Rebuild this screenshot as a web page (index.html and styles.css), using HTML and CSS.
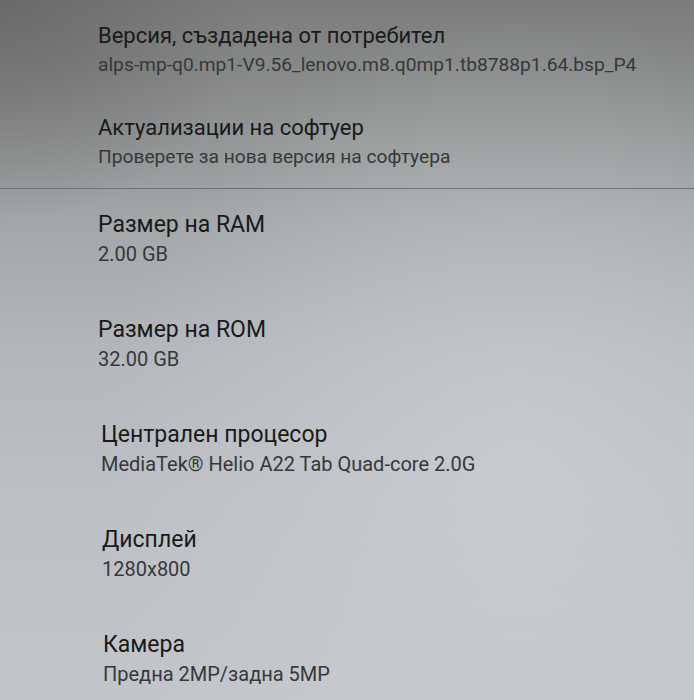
FILE: index.html
```html
<!DOCTYPE html>
<html lang="bg">
<head>
<meta charset="utf-8">
<link rel="stylesheet" href="styles.css">
</head>
<body>
<div class="screen">
  <div class="section section-top">
    <div class="item">
      <div class="title">Версия, създадена от потребител</div>
      <div class="summary">alps-mp-q0.mp1-V9.56_lenovo.m8.q0mp1.tb8788p1.64.bsp_P4</div>
    </div>
    <div class="item">
      <div class="title">Актуализации на софтуер</div>
      <div class="summary">Проверете за нова версия на софтуера</div>
    </div>
  </div>
  <div class="divider"></div>
  <div class="section section-bottom">
    <div class="item">
      <div class="title">Размер на RAM</div>
      <div class="summary">2.00 GB</div>
    </div>
    <div class="item">
      <div class="title">Размер на ROM</div>
      <div class="summary">32.00 GB</div>
    </div>
    <div class="item shift-1">
      <div class="title">Централен процесор</div>
      <div class="summary">MediaTek® Helio A22 Tab Quad-core 2.0G</div>
    </div>
    <div class="item shift-2">
      <div class="title">Дисплей</div>
      <div class="summary">1280x800</div>
    </div>
    <div class="item shift-3">
      <div class="title">Камера</div>
      <div class="summary">Предна 2MP/задна 5MP</div>
    </div>
  </div>
</div>
</body>
</html>
```
FILE: styles.css
```css
html, body {
  margin: 0;
  padding: 0;
}
body {
  width: 694px;
  height: 700px;
  overflow: hidden;
  font-family: Roboto, "Noto Sans", "Liberation Sans", sans-serif;
}
.screen {
  width: 694px;
  height: 700px;
  background:
    radial-gradient(ellipse 260px 220px at 0px 0px, rgba(100,96,100,0.7) 0%, rgba(100,96,100,0) 100%),
    radial-gradient(ellipse 420px 460px at 520px 470px, rgba(205,209,212,0.7) 0%, rgba(205,209,212,0) 100%),
    linear-gradient(180deg, #7b7d7c 0%, #8c8f8e 15%, #a3a7a9 32%, #b3b7bb 50%, #bcc0c5 70%, #c2c6ca 100%);
  display: flex;
  flex-direction: column;
}
.section {
  display: flex;
  flex-direction: column;
  padding-left: 98px;
}
.section-top {
  padding-top: 21px;
  padding-bottom: 16px;
  gap: 33px;
}
.section-bottom {
  padding-top: 21px;
  gap: 46px;
}
.divider {
  height: 1px;
  background: #6f7275;
}
.item {
  display: flex;
  flex-direction: column;
}
.shift-1 { padding-left: 3px; }
.shift-2 { padding-left: 4px; }
.shift-3 { padding-left: 5px; }
.title {
  font-size: 22px;
  line-height: 29px;
  color: #191a1b;
}
.summary {
  font-size: 19.2px;
  line-height: 30px;
  color: #36383a;
}
.section-bottom .title {
  font-size: 23px;
}
.section-bottom .summary {
  font-size: 20px;
}
```
